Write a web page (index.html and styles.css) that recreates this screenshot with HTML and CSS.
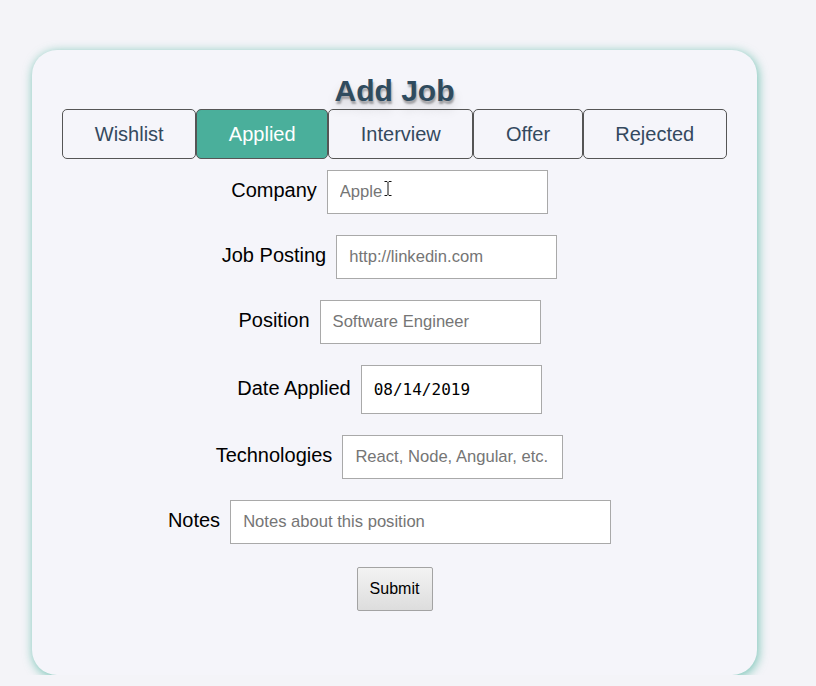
FILE: index.html
```html
<!DOCTYPE html>
<html lang="en">
<head>
<meta charset="utf-8">
<title>Add Job</title>
<link rel="stylesheet" href="styles.css">
</head>
<body>
<main class="page">
  <section class="card">
    <h1 class="title">Add Job</h1>
    <div class="tabs">
      <button class="tab" type="button">Wishlist</button>
      <button class="tab tab-active" type="button">Applied</button>
      <button class="tab" type="button">Interview</button>
      <button class="tab" type="button">Offer</button>
      <button class="tab" type="button">Rejected</button>
    </div>
    <form class="form">
      <div class="row">
        <label class="label" for="company">Company</label>
        <span class="field-wrap">
          <input class="input" id="company" type="text" placeholder="Apple">
          <svg class="cursor" width="8" height="17" viewBox="0 0 8 17" aria-hidden="true">
            <path d="M0.5 1.5h2.5l1 1 1-1h2.5M4 2.5v12M0.5 15.5h2.5l1-1 1 1h2.5" fill="none" stroke="#fff" stroke-width="2.2"/>
            <path d="M0.5 1.5h2.5l1 1 1-1h2.5M4 2.5v12M0.5 15.5h2.5l1-1 1 1h2.5" fill="none" stroke="#111" stroke-width="1"/>
          </svg>
        </span>
      </div>
      <div class="row">
        <label class="label" for="posting">Job Posting</label>
        <input class="input" id="posting" type="text" placeholder="http://linkedin.com">
      </div>
      <div class="row">
        <label class="label" for="position">Position</label>
        <input class="input" id="position" type="text" placeholder="Software Engineer">
      </div>
      <div class="row">
        <label class="label" for="date">Date Applied</label>
        <input class="input input-date" id="date" type="text" value="08/14/2019">
      </div>
      <div class="row">
        <label class="label" for="tech">Technologies</label>
        <input class="input" id="tech" type="text" placeholder="React, Node, Angular, etc.">
      </div>
      <div class="row">
        <label class="label" for="notes">Notes</label>
        <input class="input input-wide" id="notes" type="text" placeholder="Notes about this position">
      </div>
      <div class="actions">
        <button class="submit" type="button">Submit</button>
      </div>
    </form>
  </section>
</main>
</body>
</html>
```
FILE: styles.css
```css
html, body {
  margin: 0;
  padding: 0;
  background: #f4f4f8;
  font-family: "Liberation Sans", Arial, sans-serif;
}

.page {
  padding: 50px 0 0 32px;
}

.card {
  box-sizing: border-box;
  width: 725px;
  height: 625px;
  background: #f5f5fa;
  border-radius: 25px;
  box-shadow: 1px 2px 10px 1px rgba(72, 176, 155, 0.65);
  padding: 23px 0 0;
  display: flex;
  flex-direction: column;
  align-items: center;
}

.title {
  margin: 0 0 1px;
  font-size: 30px;
  line-height: 35px;
  font-weight: bold;
  color: #2f4b5e;
  text-shadow: 1px 3px 2px rgba(0, 0, 0, 0.3), 0 8px 12px rgba(0, 0, 0, 0.15);
}

.tabs {
  display: flex;
}

.tab {
  box-sizing: border-box;
  height: 50px;
  margin: 0;
  padding: 0 31.6px;
  font-family: "Liberation Sans", Arial, sans-serif;
  font-size: 20px;
  line-height: 22px;
  color: #34495e;
  background: transparent;
  border: 1px solid #555;
  border-radius: 5px;
}

.tab-active {
  background: #4aaf9b;
  color: #fff;
}

.form {
  margin-top: 11px;
  display: flex;
  flex-direction: column;
  align-items: center;
  gap: 21px;
}

.row {
  display: flex;
  align-items: baseline;
  gap: 10px;
}

.label {
  font-size: 20px;
  color: #000;
}

.field-wrap {
  position: relative;
  display: inline-flex;
  margin-right: 10px;
}

.field-wrap .input {
  margin-right: 0;
}

.input {
  box-sizing: border-box;
  width: 221px;
  height: 44px;
  margin: 0 10px 0 0;
  padding: 0 12px;
  font-family: "Liberation Sans", Arial, sans-serif;
  font-size: 16.6px;
  color: #000;
  background: #fff;
  border: 1px solid #a9a9a9;
  border-radius: 0;
  outline: none;
}

.input::placeholder {
  color: #757575;
}

.input-date {
  width: 181px;
  height: 49px;
  font-family: "DejaVu Sans Mono", "Liberation Mono", monospace;
  font-size: 16px;
}

.input-wide {
  width: 381px;
}

.cursor {
  position: absolute;
  left: 57px;
  top: 10px;
}

.actions {
  margin-top: 2px;
}

.submit {
  box-sizing: border-box;
  width: 76px;
  height: 44px;
  padding: 0;
  font-family: "Liberation Sans", Arial, sans-serif;
  font-size: 16px;
  color: #000;
  background: linear-gradient(#f3f3f3, #dddddd);
  border: 1px solid #a3a3a3;
  border-radius: 2px;
}
```
